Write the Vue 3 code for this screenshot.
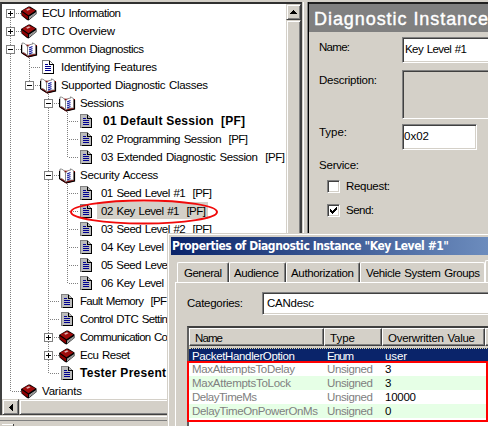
<script setup>
import { h } from 'vue'

const ctx = document.createElement('canvas').getContext('2d')
const FONTS = {
  ui: '11.5px "Liberation Sans"',
  bold: 'bold 12px "Liberation Sans"',
  title: 'bold 12px "DejaVu Sans Condensed", "DejaVu Sans"',
  head: '18px "Liberation Sans"'
}
function Fit(props) {
  ctx.font = FONTS[props.f || 'ui']
  const spaces = props.f ? 0 : props.t.split(' ').length - 1
  const gap = (props.w - spaces - ctx.measureText(props.t).width) / (props.t.length - 1)
  return h('span', { class: ['fit', props.f || 'ui'], style: { letterSpacing: gap.toFixed(3) + 'px' } }, props.t)
}
Fit.props = ['t', 'w', 'f']

// g: one guide cell per level. ' ' empty, '|' through, 'T' branch, 'L' last branch,
// 'p' first collapsed, '+' collapsed, '-' expanded, 'e' last expanded
const rows = [
  { g: 'p', i: 'book', t: 'ECU Information', w: 79 },
  { g: '+', i: 'book', t: 'DTC Overview', w: 73 },
  { g: '-', i: 'open', t: 'Common Diagnostics', w: 102 },
  { g: '|T', i: 'page', t: 'Identifying Features', w: 96 },
  { g: '|e', i: 'open', t: 'Supported Diagnostic Classes', w: 147 },
  { g: '| -', i: 'open', t: 'Sessions', w: 44 },
  { g: '| |T', i: 'doc', t: '01 Default Session  [PF]', w: 142, f: 'bold', p: 5 },
  { g: '| |T', i: 'doc', t: '02 Programming Session  [PF]', w: 147 },
  { g: '| |L', i: 'doc', t: '03 Extended Diagnostic Session  [PF]', w: 184 },
  { g: '| -', i: 'open', t: 'Security Access', w: 79 },
  { g: '| |T', i: 'doc', t: '01 Seed Level #1  [PF]', w: 111 },
  { g: '| |T', i: 'doc', t: '02 Key Level #1  [PF]', w: 105, sel: true },
  { g: '| |T', i: 'doc', t: '03 Seed Level #2  [PF]', w: 111 },
  { g: '| |T', i: 'doc', t: '04 Key Level', w: 63 },
  { g: '| |T', i: 'doc', t: '05 Seed Level', w: 69 },
  { g: '| |L', i: 'doc', t: '06 Key Level', w: 63 },
  { g: '| T', i: 'doc', t: 'Fault Memory  [PF', w: 87 },
  { g: '| T', i: 'doc', t: 'Control DTC Settin', w: 88 },
  { g: '| +', i: 'book', t: 'Communication Co', w: 88 },
  { g: '| +', i: 'book', t: 'Ecu Reset', w: 50 },
  { g: '| L', i: 'doc', t: 'Tester Present', w: 86, f: 'bold' },
  { g: 'L', i: 'book', t: 'Variants', w: 40 }
].map(r => ({ ...r, cells: [...r.g] }))

const padClass = r => (r.p === 5 ? 'pad5' : r.cells.length > 3 ? 'pad4' : 'pad2')
const isBox = c => 'p+-e'.includes(c)
const cellClass = c => ({
  up: c !== ' ' && c !== 'p',
  down: !' Le'.includes(c),
  side: !' |'.includes(c)
})

const tabs = [
  { t: 'General', w: 38, c: 't1' },
  { t: 'Audience', w: 45, c: 't2' },
  { t: 'Authorization', w: 63, c: 't3' },
  { t: 'Vehicle System Groups', w: 114, c: 't4' }
]
const attrs = [
  { n: 'PacketHandlerOption', w: 103, t: 'Enum', tw: 27, v: 'user', vw: 22 },
  { n: 'MaxAttemptsToDelay', w: 103, t: 'Unsigned', tw: 46, v: '3', vw: 7 },
  { n: 'MaxAttemptsToLock', w: 99, t: 'Unsigned', tw: 46, v: '3', vw: 7 },
  { n: 'DelayTimeMs', w: 65, t: 'Unsigned', tw: 46, v: '10000', vw: 31 },
  { n: 'DelayTimeOnPowerOnMs', w: 126, t: 'Unsigned', tw: 46, v: '0', vw: 7 }
]
const one = v => v.length === 1
</script>

<template>
  <div class="screen">
    <div class="main">
      <section class="left">
        <div class="treebox">
          <div class="tree">
            <div v-for="r in rows" :key="r.t" class="row">
              <span v-for="(c, k) in r.cells" :key="k" class="cell" :class="cellClass(c)">
                <svg v-if="isBox(c)" class="box" width="9" height="9" shape-rendering="crispEdges">
                  <rect x=".5" y=".5" width="8" height="8" fill="#fff" stroke="#808080" />
                  <path d="M2 4.500h5" stroke="#000" />
                  <path v-if="c === 'p' || c === '+'" d="M4.500 2v5" stroke="#000" />
                </svg>
              </span>
              <span class="icon">
                <svg v-if="r.i === 'book'" width="17" height="15" viewBox="0 0 17 15">
                  <path d="M0 5 7.500 .5 9 .5 15.500 4.500V8L7.500 14.500 6 14 .5 9.500Z" fill="#000" />
                  <path d="M1 4.800 7.800 1 14.500 4.500 7.500 9.300Z" fill="#a00c0c" />
                  <path d="M.8 6 7 10.300V13.500L1 9.200Z" fill="#8a0000" />
                  <path d="M8 10.800 15 6.300V8L8 13.200Z" fill="#c8c8c8" />
                  <path d="M8 12 15 7.200" stroke="#555" stroke-width=".6" />
                  <path d="M5 3.800 8 2.200 9.500 3.200 6.500 4.800Z" fill="#dcb4b4" />
                </svg>
                <svg v-else-if="r.i === 'open'" width="17" height="16" viewBox="0 0 17 16">
                  <path d="M.5 2.500V11L7 15.500 16 13V3" fill="#900000" />
                  <path d="M7 15 15.500 13V4" fill="none" stroke="#000" stroke-width="1.200" />
                  <path d="M1 1C3.500 .8 5.500 2.500 6.500 5V13.800C5 11.500 3 10.500 1 10.300Z" fill="#fff" stroke="#777" stroke-width=".8" />
                  <path d="M6.500 5C8 3 9.500 2 11.500 2.200V.8L14.500 2.500V12C11 12 8.500 12.500 6.500 14Z" fill="#fff" stroke="#777" stroke-width=".8" />
                  <path d="M8 6 11.500 4.500M8 8 11.500 6.500M8 10 11.500 8.500M8 12 11.500 10.500" stroke="#1018a0" stroke-width="1.100" />
                  <path d="M.5 3V11L6.500 14.500" fill="none" stroke="#000" />
                </svg>
                <svg v-else class="sheet" width="12" height="14" viewBox="0 0 12 14" shape-rendering="crispEdges">
                  <path d="M.5 .5H7.500L11.500 4.500V13.500H.5Z" :fill="r.i === 'page' ? '#fff' : '#bcbcbc'" stroke="#808080" />
                  <path d="M7.500 1V4.500H11.500V13.500H2" fill="none" stroke="#000" />
                  <path d="M3 4.500H6M3 6.500H9M3 8.500H9M3 10.500H9" stroke="#000090" />
                </svg>
              </span>
              <span class="label" :class="[padClass(r), { sel: r.sel }]"><Fit :t="r.t" :w="r.w" :f="r.f" /></span>
            </div>
          </div>
          <div class="vscroll">
            <div class="sbtn"><svg width="7" height="4" shape-rendering="crispEdges"><path d="M3 0h1v1h1v1h1v1h1v1H0V3h1V2h1V1h1Z" /></svg></div>
            <div class="thumb"></div>
          </div>
        </div>
        <div class="hscroll">
          <div class="sbtn"><svg width="4" height="7" shape-rendering="crispEdges"><path d="M4 0v7H3V6H2V5H1V4H0V3h1V2h1V1h1V0Z" /></svg></div>
          <div class="thumb"></div>
        </div>
        <div class="under"><div class="stub"></div></div>
      </section>
      <div class="splitter"></div>
      <section class="right">
        <header><Fit t="Diagnostic Instance" :w="174" f="head" /></header>
        <div class="form">
          <div class="field f-name"><label><Fit t="Name:" :w="31" /></label><div class="input wide"><Fit t="Key Level #1" :w="62" /></div></div>
          <div class="field f-desc"><label><Fit t="Description:" :w="58" /></label><div class="input wide flat"></div></div>
          <div class="field f-type"><label><Fit t="Type:" :w="28" /></label><div class="input short"><Fit t="0x02" :w="25" /></div></div>
          <div class="service"><Fit t="Service:" :w="40" /></div>
          <div class="check"><i class="cb"></i><Fit t="Request:" :w="44" /></div>
          <div class="check"><i class="cb"><svg width="9" height="9" shape-rendering="crispEdges"><path d="M1 3h1v1h1v1h1V4h1V3h1V2h1V1h1v3H7v1H6v1H5v1H4v1H3V7H2V6H1Z" /></svg></i><Fit t="Send:" :w="28" /></div>
        </div>
      </section>
    </div>

    <svg class="ring" width="150" height="28"><ellipse cx="75" cy="14" rx="73" ry="11.500" fill="none" stroke="#f00a0a" stroke-width="2" /></svg>

    <div class="dialog">
      <div class="caption"><Fit t='Properties of Diagnostic Instance "Key Level #1"' :w="277" f="title" /></div>
      <div class="tabs">
        <div v-for="t in tabs" :key="t.t" class="tab" :class="t.c"><Fit :t="t.t" :w="t.w" /></div>
        <div class="tab active"></div>
      </div>
      <div class="page">
        <div class="cat"><span class="catl"><Fit t="Categories:" :w="56" /></span><div class="input combo"><Fit t="CANdesc" :w="47" /></div></div>
        <div class="table">
          <div class="thead">
            <div class="th c1"><Fit t="Name" :w="28" /></div>
            <div class="th c2"><Fit t="Type" :w="25" /></div>
            <div class="th c3"><Fit t="Overwritten Value" :w="87" /></div>
            <div class="th c4"></div>
          </div>
          <div v-for="(a, k) in attrs" :key="a.n" class="tr" :class="{ picked: k === 0, green: k === 2 || k === 4 }">
            <span class="td d1"><Fit :t="a.n" :w="a.w" /></span>
            <span class="td d2"><Fit :t="a.t" :w="a.tw" /></span>
            <span class="td d3"><template v-if="one(a.v)">{{ a.v }}</template><Fit v-else :t="a.v" :w="a.vw" /></span>
          </div>
        </div>
      </div>
      <div class="mark"></div>
    </div>
  </div>
</template>

<style>
body { background: #d4d0c8; overflow: hidden; }
.fit { white-space: pre; display: inline-block; }
.fit.ui { word-spacing: 1px; }
.fit.bold { font-weight: bold; font-size: 12px; }
.fit.head { font-size: 18px; -webkit-text-stroke: .4px #fff; }
.fit.title { font: bold 12px/18px "DejaVu Sans Condensed", "DejaVu Sans", sans-serif; }
</style>

<style scoped>
* { box-sizing: border-box; }
.screen { position: relative; width: 488px; height: 426px; overflow: hidden; background: #d4d0c8; font: 11.5px/18px "Liberation Sans", sans-serif; color: #000; }
svg { display: block; }
.main { display: flex; height: 426px; }
.left { width: 302px; height: 426px; display: flex; flex-direction: column; padding-top: 2px; flex: none; }
.treebox { display: flex; height: 397px; border: solid #404040; border-width: 2px 1px 0 2px; border-top-color: #303030; background: #fff; }
.tree { width: 284px; overflow: hidden; }
.row { display: flex; height: 18px; white-space: nowrap; }
.cell { position: relative; width: 19px; flex: none; }
.cell.up::before, .cell.down::after { content: ""; position: absolute; left: 8px; width: 1px; height: 9px; background: repeating-linear-gradient(#808080 0 1px, #fff 1px 2px); }
.cell.up::before { top: 0; height: 10px; }
.cell.down::after { top: 10px; height: 8px; }
.cell.side { background: repeating-linear-gradient(90deg, #808080 0 1px, #fff 1px 2px) 8px 9px / 11px 1px no-repeat; }
.box { position: absolute; left: 4px; top: 5px; z-index: 1; }
.icon { width: 19px; flex: none; padding-top: 2px; }
.icon svg { position: relative; }
.sheet { margin-left: 2px; }
.label { height: 17px; line-height: 18px; padding-right: 2px; }
.pad2 { padding-left: 2px; }
.pad4 { padding-left: 4px; }
.pad5 { padding-left: 6px; }
.sel { background: #d4d0c8; }
.vscroll { width: 15px; display: flex; flex-direction: column; background: #d4d0c8; flex: none; }
.sbtn, .thumb { background: #d4d0c8; border: 1px solid; border-color: #d4d0c8 #404040 #404040 #d4d0c8; box-shadow: inset 1px 1px #fff, inset -1px -1px #808080; }
.sbtn { display: flex; align-items: center; justify-content: center; width: 15px; height: 16px; flex: none; }
.vscroll .thumb { flex: 1; }
.hscroll { display: flex; height: 16px; border-left: 2px solid #404040; }
.hscroll .sbtn { width: 17px; }
.hscroll .thumb { flex: 1; }
.under { height: 11px; border-top: 1px solid #d4d0c8; box-shadow: inset 0 1px #fff; padding-top: 4px; }
.stub { height: 7px; border-top: 1px solid #808080; background: linear-gradient(#fff, #fff) 2px 3px / 11px 1px no-repeat, linear-gradient(#404040, #404040) 13px 3px / 1px 4px no-repeat; }
.splitter { width: 7px; flex: none; margin-top: 2px; border: solid #000; border-width: 0 1px 0 0; background: linear-gradient(90deg, #d4d0c8 0 1px, #fff 1px 2px, #d4d0c8 2px 5px, #808080 5px 6px); }
.right { flex: 1; min-width: 0; padding-top: 2px; }
header { height: 30px; border-top: 2px solid #202020; background: #808080; color: #fff; padding: 0 0 0 5px; line-height: 31px; overflow: hidden; }
.form { padding: 5px 0 0 10px; }
.field { display: flex; align-items: flex-start; }
.field label { width: 83px; flex: none; }
.input { background: #fff; border: 1px solid; border-color: #808080 #fff #fff #808080; box-shadow: inset 1px 1px #404040, inset -1px -1px #d4d0c8; padding-left: 2px; line-height: 22px; }
.f-name label { padding-top: 1px; }
.wide { width: 100px; height: 26px; flex: none; }
.f-name { margin-bottom: 7px; }
.flat { height: 49px; background: #d4d0c8; }
.f-desc label { padding-top: 1px; }
.f-desc { margin-bottom: 5px; }
.short { width: 75px; height: 26px; padding-left: 1px; }
.f-type label { line-height: 17px; }
.f-type { height: 32px; }
.service { height: 24px; line-height: 18px; }
.check { display: flex; height: 24px; padding-left: 8px; gap: 6px; line-height: 13px; }
.cb { width: 13px; height: 13px; flex: none; background: #fff; border: 1px solid; border-color: #808080 #fff #fff #808080; box-shadow: inset 1px 1px #404040, inset -1px -1px #d4d0c8; padding: 1px; }
.ring { position: absolute; left: 69px; top: 198px; }
.dialog { position: absolute; left: 167px; top: 233px; width: 340px; height: 220px; background: #d4d0c8; border: 1px solid #d4d0c8; box-shadow: inset 1px 1px #fff; padding: 3px 0 0 3px; }
.caption { height: 18px; line-height: 18px; padding-left: 1px; background: linear-gradient(90deg, #0a246a, #6c8cbd 317px, #7090c0); color: #fff; overflow: hidden; }
.tabs { display: flex; padding: 7px 0 0 6px; height: 27px; }
.tab { height: 20px; border: solid; border-width: 1px 1px 0 1px; border-color: #fff #404040 #fff #fff; border-radius: 2px 2px 0 0; box-shadow: inset -1px 0 #808080; line-height: 20px; flex: none; }
.t1 { width: 52px; padding-left: 6px; }
.t2 { width: 57px; padding-left: 4px; }
.t3 { width: 74px; padding-left: 4px; }
.t4 { width: 125px; padding-left: 5px; border-right-color: #fff; box-shadow: none; }
.active { width: 40px; height: 22px; margin-top: -2px; }
.page { margin-left: 4px; border: solid #fff; border-width: 1px 0 0 1px; height: 150px; padding: 9px 0 0 11px; }
.cat { display: flex; height: 34px; }
.catl { width: 75px; padding-top: 2px; flex: none; }
.combo { width: 250px; height: 23px; line-height: 21px; padding-left: 4px; flex: none; }
.table { width: 330px; height: 110px; background: #fff; border: solid #404040; border-width: 2px 0 0 2px; border-left-color: #606060; }
.thead { display: flex; height: 20px; background: #d4d0c8; }
.th { height: 18px; border: solid; border-width: 1px; border-color: #fff #404040 #404040 #fff; box-shadow: inset -1px -1px #808080; line-height: 18px; flex: none; }
.c1 { width: 135px; padding-left: 5px; }
.c2 { width: 58px; padding-left: 5px; }
.c3 { width: 103px; padding-left: 5px; }
.c4 { width: 40px; }
.tr { display: flex; height: 14px; line-height: 15px; color: #808080; }
.picked { background: #0a246a; color: #fff; border-top: 1px dotted #e8dca0; line-height: 14px; }
.green { background: #e6ffe6; }
.td { flex: none; }
.d1 { width: 138px; padding-left: 3px; }
.d2 { width: 58px; }
.d3 { color: #000; }
.picked .d3 { color: #fff; }
.mark { position: absolute; left: 19px; top: 127px; width: 301px; height: 61px; border: 2px solid #f00; }
</style>
